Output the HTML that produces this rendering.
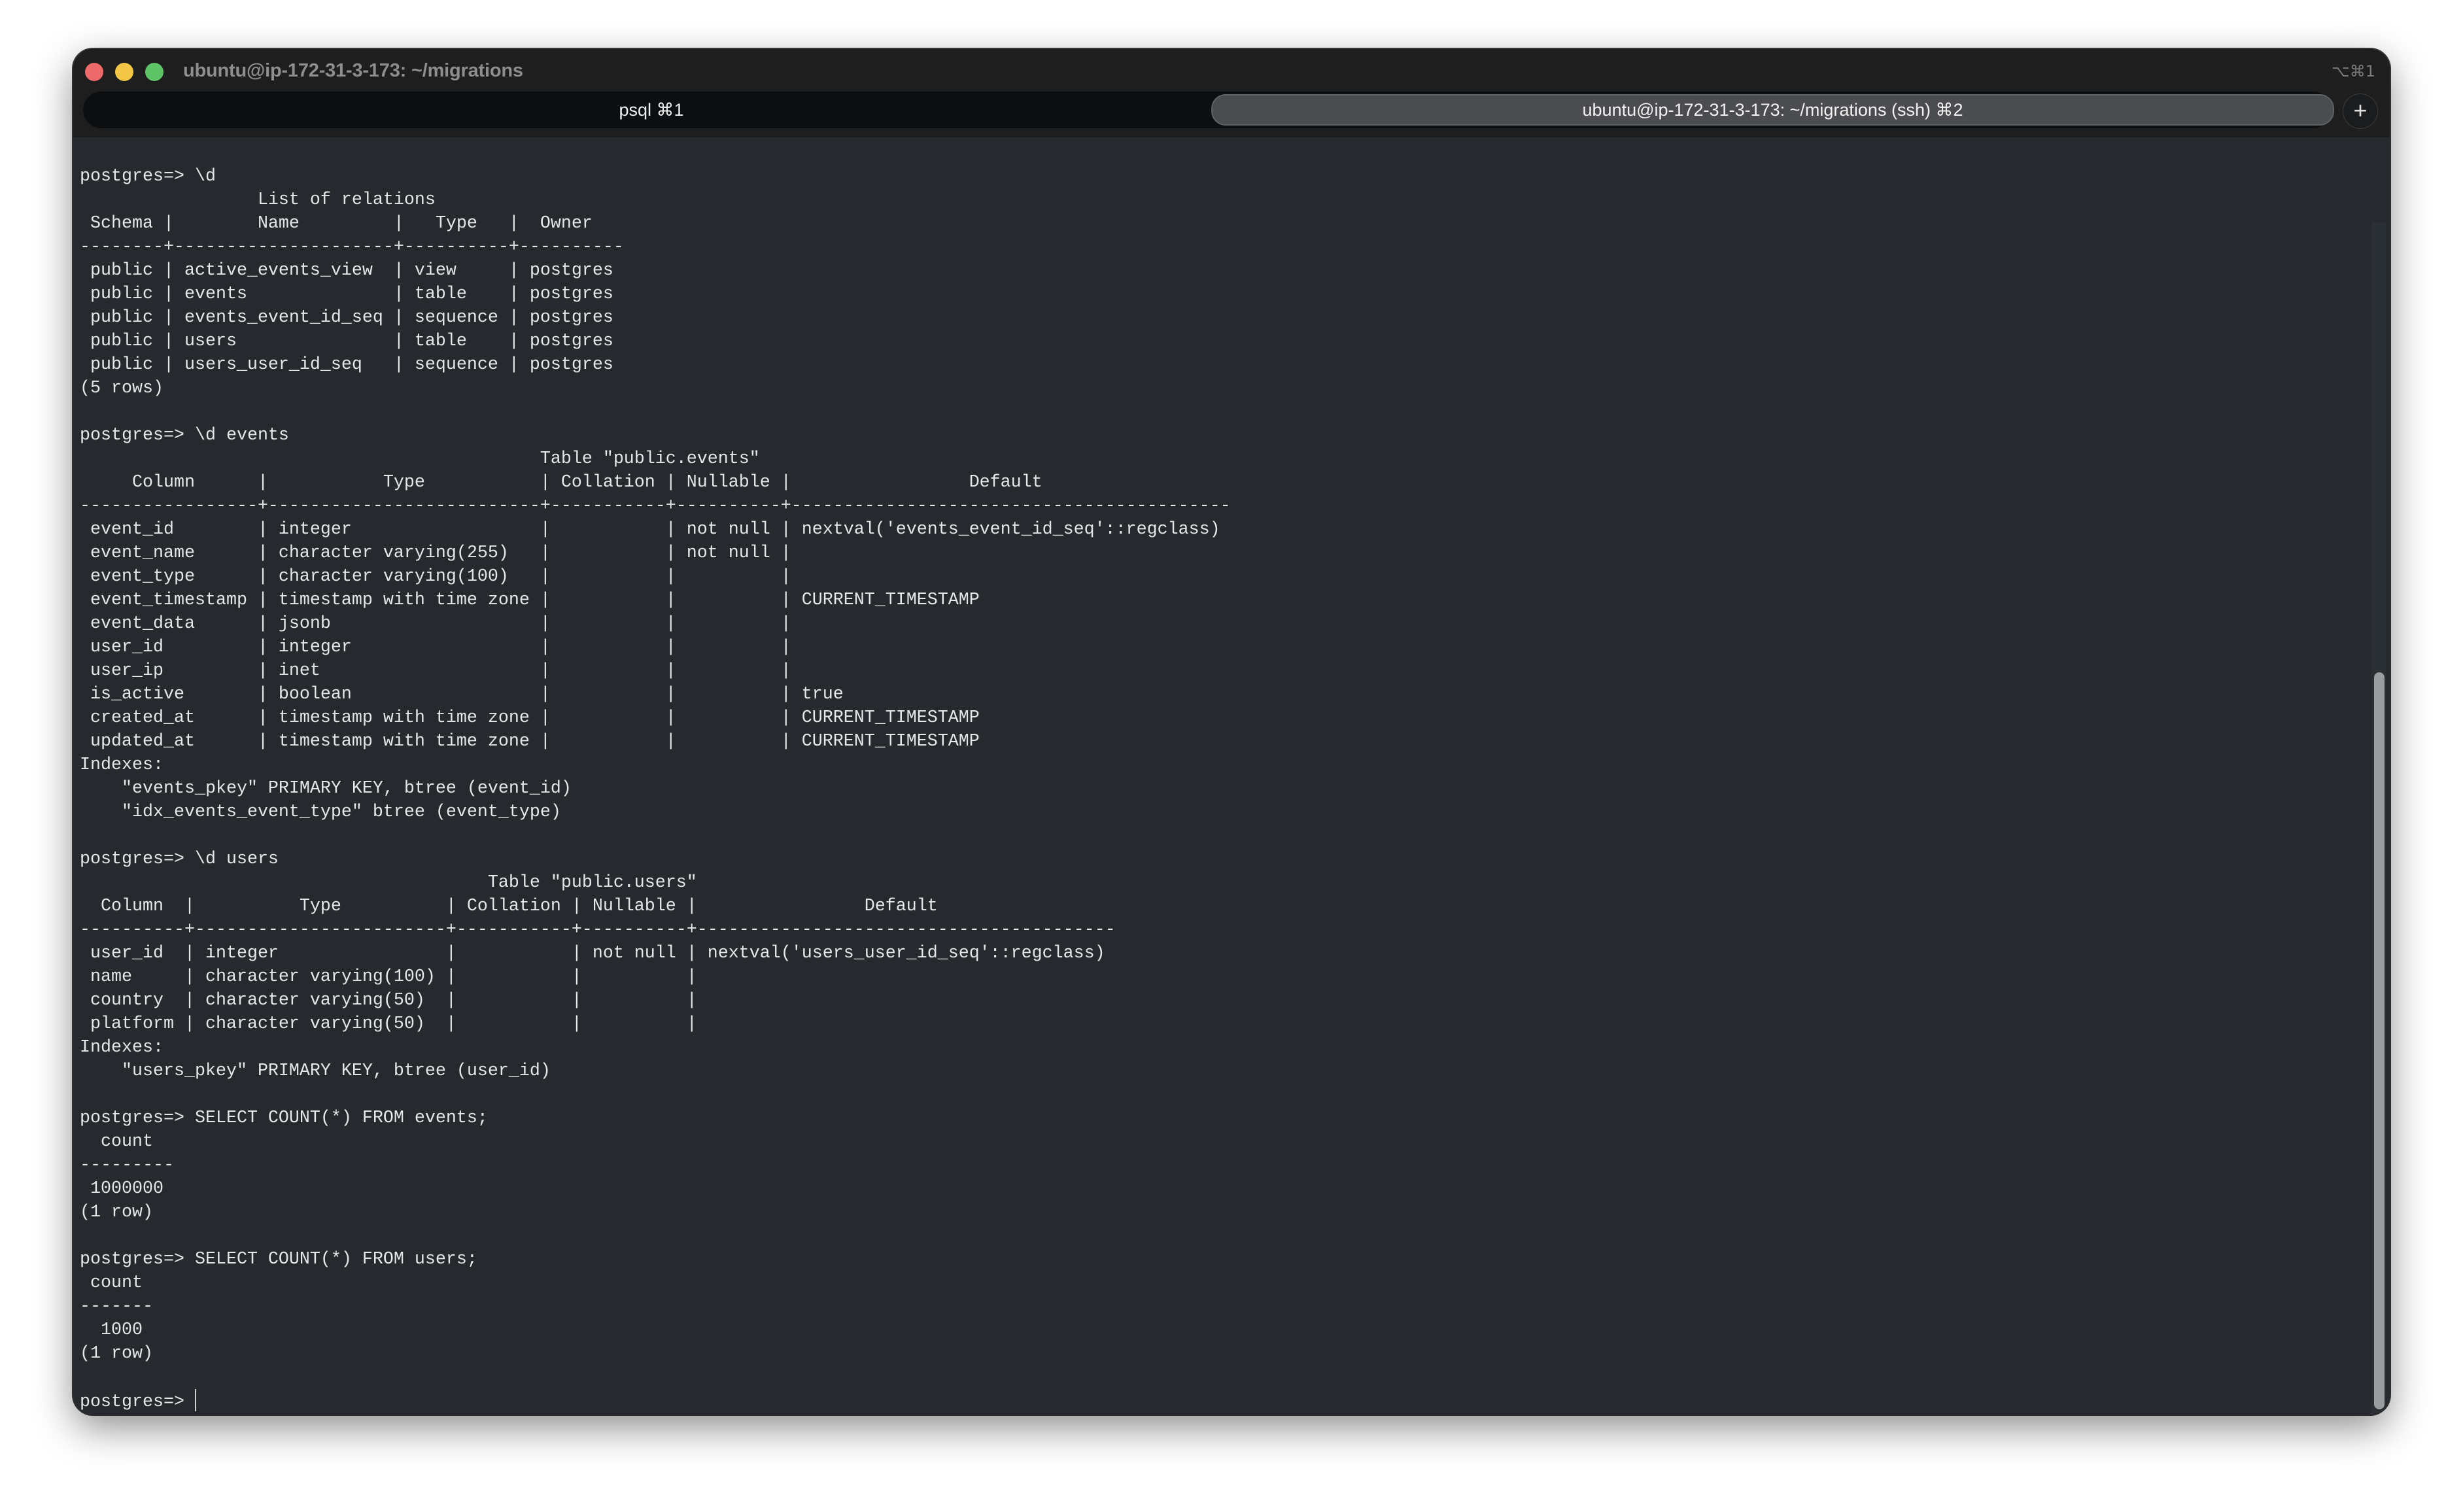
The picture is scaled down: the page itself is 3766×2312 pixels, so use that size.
<!DOCTYPE html>
<html><head><meta charset="utf-8"><style>
html,body{margin:0;padding:0;width:3766px;height:2312px;background:#fff;overflow:hidden}
.win{position:absolute;left:112px;top:75px;width:3542px;height:2088px;border-radius:30px;background:#262a2e;overflow:hidden;box-shadow:0 20px 60px rgba(0,0,0,.45),0 0 0 2px #3a3a3a}
.title{position:absolute;left:0;top:0;right:0;height:135px;background:#1e1e1e}
.dot{position:absolute;top:21px;width:28px;height:28px;border-radius:50%}
.tt{position:absolute;left:168px;top:17px;font:bold 29px "Liberation Sans",sans-serif;color:#8e8e8e;letter-spacing:-0.2px}
.kb{position:absolute;right:22px;top:20px;font:24px "DejaVu Sans",sans-serif;color:#7a7a7a}
.tabbar{position:absolute;left:15px;top:65px;width:3438px;height:56px;border-radius:28px;background:#0c0f11}
.tab1{position:absolute;left:0;width:1738px;top:0;height:56px;text-align:center;font:27px/56px "Liberation Sans","DejaVu Sans",sans-serif;color:#f0f0f0}
.tab2{position:absolute;left:1725px;top:4px;width:1713px;height:44px;border-radius:22px;background:#4a4c4f;border:2px solid #5f6265;text-align:center;font:27px/44px "Liberation Sans","DejaVu Sans",sans-serif;color:#f2f2f2}
.plus{position:absolute;left:3470px;top:68px;width:52px;height:52px;border-radius:50%;background:#1a1c1e;border:1px solid #3a3c3e;color:#e0e0e0;font:36px/50px "Liberation Sans",sans-serif;text-align:center}
pre{position:absolute;left:10px;top:177px;margin:0;font:26.67px/36px "Liberation Mono",monospace;color:#e4e6e8}
.track{position:absolute;left:3514px;top:265px;width:22px;height:1823px;background:#2a2f33}
.thumb{position:absolute;left:3518px;top:953px;width:16px;height:1127px;border-radius:8px;background:#9a9da0}
.cur{display:inline-block;width:2px;height:34px;background:#d0d0d0;vertical-align:-8px}
</style></head><body>
<div class="win">
<div class="title">
<div class="dot" style="left:18px;background:#ee6a6a"></div>
<div class="dot" style="left:64px;background:#f3c646"></div>
<div class="dot" style="left:110px;background:#5ec465"></div>
<div class="tt">ubuntu@ip-172-31-3-173: ~/migrations</div>
<div class="kb">⌥⌘1</div>
<div class="tabbar"><div class="tab1">psql ⌘1</div><div class="tab2">ubuntu@ip-172-31-3-173: ~/migrations (ssh) ⌘2</div></div>
<div class="plus">+</div>
</div>
<div class="track"></div><div class="thumb"></div>
<pre>postgres=&gt; \d
                 List of relations
 Schema |        Name         |   Type   |  Owner
--------+---------------------+----------+----------
 public | active_events_view  | view     | postgres
 public | events              | table    | postgres
 public | events_event_id_seq | sequence | postgres
 public | users               | table    | postgres
 public | users_user_id_seq   | sequence | postgres
(5 rows)

postgres=&gt; \d events
                                            Table "public.events"
     Column      |           Type           | Collation | Nullable |                 Default
-----------------+--------------------------+-----------+----------+------------------------------------------
 event_id        | integer                  |           | not null | nextval('events_event_id_seq'::regclass)
 event_name      | character varying(255)   |           | not null |
 event_type      | character varying(100)   |           |          |
 event_timestamp | timestamp with time zone |           |          | CURRENT_TIMESTAMP
 event_data      | jsonb                    |           |          |
 user_id         | integer                  |           |          |
 user_ip         | inet                     |           |          |
 is_active       | boolean                  |           |          | true
 created_at      | timestamp with time zone |           |          | CURRENT_TIMESTAMP
 updated_at      | timestamp with time zone |           |          | CURRENT_TIMESTAMP
Indexes:
    "events_pkey" PRIMARY KEY, btree (event_id)
    "idx_events_event_type" btree (event_type)

postgres=&gt; \d users
                                       Table "public.users"
  Column  |          Type          | Collation | Nullable |                Default
----------+------------------------+-----------+----------+----------------------------------------
 user_id  | integer                |           | not null | nextval('users_user_id_seq'::regclass)
 name     | character varying(100) |           |          |
 country  | character varying(50)  |           |          |
 platform | character varying(50)  |           |          |
Indexes:
    "users_pkey" PRIMARY KEY, btree (user_id)

postgres=&gt; SELECT COUNT(*) FROM events;
  count
---------
 1000000
(1 row)

postgres=&gt; SELECT COUNT(*) FROM users;
 count
-------
  1000
(1 row)

postgres=&gt; <span class="cur"></span></pre>
</div>
</body></html>
